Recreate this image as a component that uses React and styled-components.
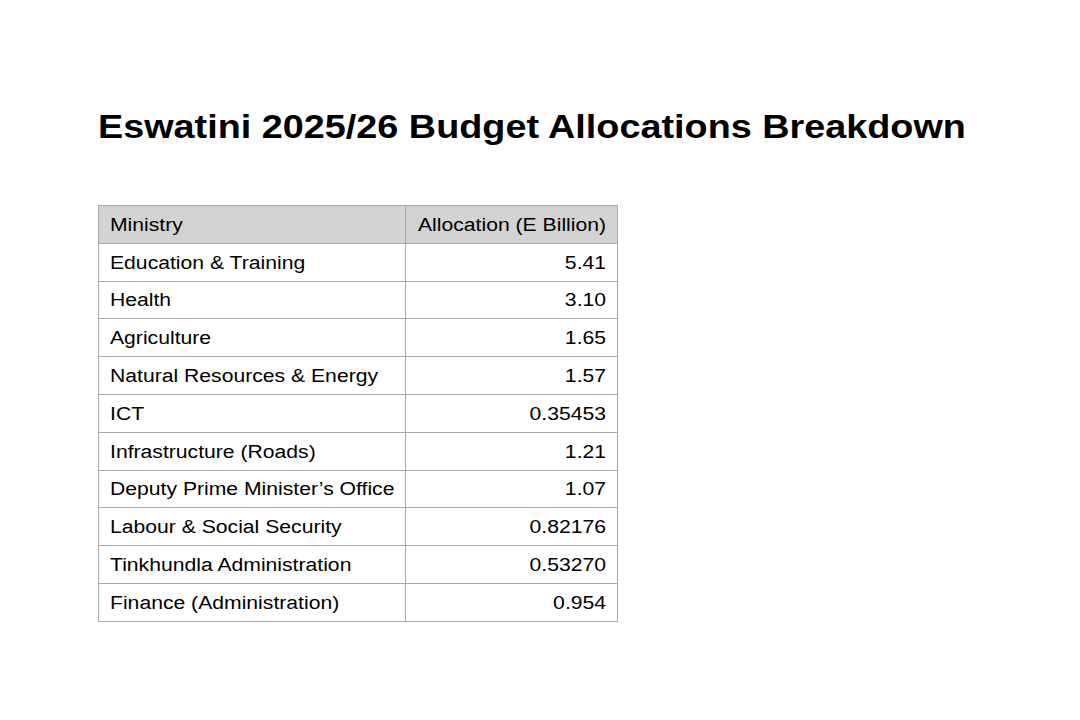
import React from "react";
import styled, { createGlobalStyle } from "styled-components";

const Global = createGlobalStyle`
  html, body { margin: 0; padding: 0; background: #fff; }
  body { font-family: "Liberation Sans", Arial, sans-serif; color: #000; }
`;

const Page = styled.div`
  width: 1080px;
  height: 720px;
  box-sizing: border-box;
  padding: 105px 0 0 98px;
  display: flex;
  flex-direction: column;
  align-items: flex-start;
`;

const Title = styled.h1`
  margin: 0;
  font-size: 33px;
  font-weight: 700;
  line-height: 44px;
  transform: scaleX(1.145);
  transform-origin: left center;
  white-space: nowrap;
`;

const Table = styled.table`
  margin-top: 56px;
  border-collapse: collapse;
  font-size: 18px;
  width: 520px;
`;

const Cell = styled.td`
  border: 1px solid #a9a9a9;
  height: 37.8px;
  padding: 2px 11px 0;
  box-sizing: border-box;
  text-align: ${(p) => (p.$num ? "right" : "left")};
  width: ${(p) => (p.$num ? "212px" : "auto")};
  white-space: nowrap;
`;

const HeadCell = styled(Cell).attrs({ as: "th" })`
  background: #d3d3d3;
  font-weight: 400;
`;

const Text = styled.span`
  display: inline-block;
  transform: scaleX(1.175);
  transform-origin: ${(p) => (p.$num ? "right" : "left")} center;
`;

const rows = [
  ["Education & Training", "5.41"],
  ["Health", "3.10"],
  ["Agriculture", "1.65"],
  ["Natural Resources & Energy", "1.57"],
  ["ICT", "0.35453"],
  ["Infrastructure (Roads)", "1.21"],
  ["Deputy Prime Minister\u2019s Office", "1.07"],
  ["Labour & Social Security", "0.82176"],
  ["Tinkhundla Administration", "0.53270"],
  ["Finance (Administration)", "0.954"],
];

export default function App() {
  return (
    <>
      <Global />
      <Page>
        <Title>Eswatini 2025/26 Budget Allocations Breakdown</Title>
        <Table>
          <thead>
            <tr>
              <HeadCell><Text>Ministry</Text></HeadCell>
              <HeadCell $num><Text $num>Allocation (E Billion)</Text></HeadCell>
            </tr>
          </thead>
          <tbody>
            {rows.map(([m, v]) => (
              <tr key={m}>
                <Cell><Text>{m}</Text></Cell>
                <Cell $num><Text $num>{v}</Text></Cell>
              </tr>
            ))}
          </tbody>
        </Table>
      </Page>
    </>
  );
}
